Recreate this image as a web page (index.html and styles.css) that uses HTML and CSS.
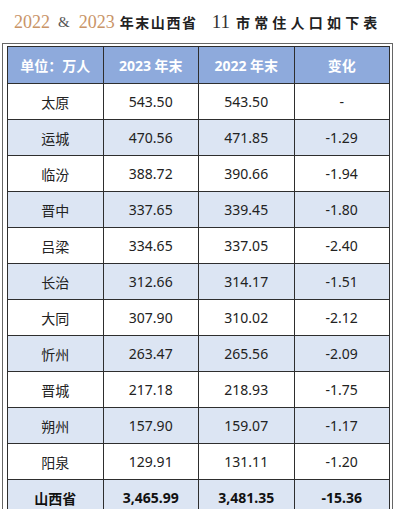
FILE: index.html
```html
<!DOCTYPE html>
<html>
<head>
<meta charset="utf-8">
<link rel="stylesheet" href="styles.css">
</head>
<body>
<div class="title"><span class="yr">2022</span><span class="amp">&amp;</span><span class="yr">2023</span><span class="cn">年末山西省</span><span class="num">11</span><span class="cn cn2">市常住人口如下表</span></div>
<div class="frame">
<table class="pop">
<thead>
<tr><th>单位：万人</th><th>2023 年末</th><th>2022 年末</th><th>变化</th></tr>
</thead>
<tbody>
<tr><td>太原</td><td>543.50</td><td>543.50</td><td>-</td></tr>
<tr class="band"><td>运城</td><td>470.56</td><td>471.85</td><td>-1.29</td></tr>
<tr><td>临汾</td><td>388.72</td><td>390.66</td><td>-1.94</td></tr>
<tr class="band"><td>晋中</td><td>337.65</td><td>339.45</td><td>-1.80</td></tr>
<tr><td>吕梁</td><td>334.65</td><td>337.05</td><td>-2.40</td></tr>
<tr class="band"><td>长治</td><td>312.66</td><td>314.17</td><td>-1.51</td></tr>
<tr><td>大同</td><td>307.90</td><td>310.02</td><td>-2.12</td></tr>
<tr class="band"><td>忻州</td><td>263.47</td><td>265.56</td><td>-2.09</td></tr>
<tr><td>晋城</td><td>217.18</td><td>218.93</td><td>-1.75</td></tr>
<tr class="band"><td>朔州</td><td>157.90</td><td>159.07</td><td>-1.17</td></tr>
<tr><td>阳泉</td><td>129.91</td><td>131.11</td><td>-1.20</td></tr>
<tr class="band total"><td>山西省</td><td>3,465.99</td><td>3,481.35</td><td>-15.36</td></tr>
</tbody>
</table>
</div>
</body>
</html>
```
FILE: styles.css
```css
html, body {
  margin: 0;
  padding: 0;
  background: #ffffff;
}
body {
  width: 401px;
  height: 509px;
  overflow: hidden;
}
.title {
  height: 43px;
  display: flex;
  align-items: center;
  padding-left: 14px;
  padding-top: 1px;
  box-sizing: border-box;
  white-space: nowrap;
}
.yr {
  font-family: "Liberation Serif", serif;
  font-size: 18px;
  color: #c99467;
}
.amp {
  font-family: "Liberation Serif", serif;
  font-size: 15px;
  color: #555;
  margin: 0 9px 0 8px;
}
.cn {
  font-family: "Noto Sans CJK SC", sans-serif;
  font-weight: 700;
  font-size: 14px;
  letter-spacing: 1.6px;
  color: #222;
  margin-left: 5px;
}
.cn2 {
  letter-spacing: 4.2px;
  margin-left: 6px;
}
.num {
  font-family: "Liberation Serif", serif;
  font-size: 19px;
  color: #333;
  margin-left: 14px;
}
.frame {
  margin-left: 2px;
  width: 391px;
  box-sizing: border-box;
  border: 1px solid #666;
  border-bottom: none;
  padding: 2px 2px 0 4px;
}
.pop {
  width: 383px;
  border-collapse: collapse;
  table-layout: fixed;
  font-family: "Noto Sans", "Noto Sans CJK SC", sans-serif;
  font-size: 14px;
  color: #222;
}
.pop th, .pop td {
  border: 1px solid #2e2e2e;
  text-align: center;
  padding: 0;
  height: 35px;
}
.pop th {
  background: #8eaadc;
  color: #ffffff;
  font-weight: 700;
  height: 36px;
}
.pop td:first-child {
  font-family: "Noto Sans CJK SC", sans-serif;
}
.band td {
  background: #dce5f3;
}
.total td {
  font-weight: 700;
  color: #111;
}
```
